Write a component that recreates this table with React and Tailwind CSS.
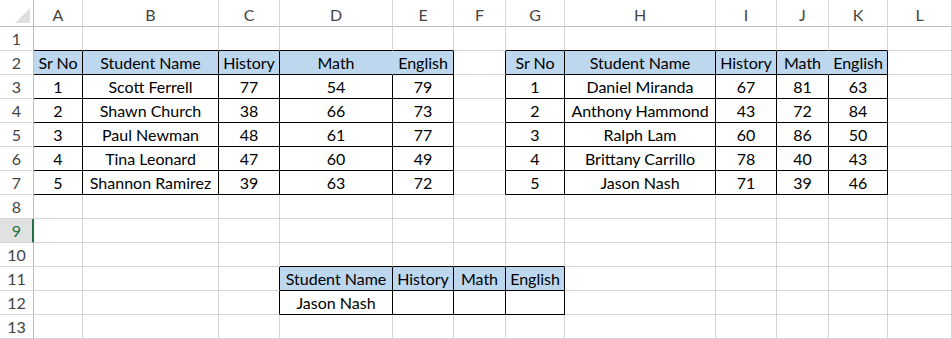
import React from "react";

const COLS = ["A", "B", "C", "D", "E", "F", "G", "H", "I", "J", "K", "L"];

// data[r][c] with r 1..13, c 1..12
const cells = {};
const put = (r, c, v) => {
  cells[`${r}-${c}`] = v;
};
const hdr = ["Sr No", "Student Name", "History", "Math", "English"];
hdr.forEach((h, i) => {
  put(2, 1 + i, h);
  put(2, 7 + i, h);
});
const t1 = [
  [1, "Scott Ferrell", 77, 54, 79],
  [2, "Shawn Church", 38, 66, 73],
  [3, "Paul Newman", 48, 61, 77],
  [4, "Tina Leonard", 47, 60, 49],
  [5, "Shannon Ramirez", 39, 63, 72],
];
const t2 = [
  [1, "Daniel Miranda", 67, 81, 63],
  [2, "Anthony Hammond", 43, 72, 84],
  [3, "Ralph Lam", 60, 86, 50],
  [4, "Brittany Carrillo", 78, 40, 43],
  [5, "Jason Nash", 71, 39, 46],
];
t1.forEach((row, i) => row.forEach((v, j) => put(3 + i, 1 + j, v)));
t2.forEach((row, i) => row.forEach((v, j) => put(3 + i, 7 + j, v)));
["Student Name", "History", "Math", "English"].forEach((h, i) => put(11, 4 + i, h));
put(12, 4, "Jason Nash");

const tables = [
  { r0: 2, r1: 7, c0: 1, c1: 5, noDiv: 4 },
  { r0: 2, r1: 7, c0: 7, c1: 11, noDiv: 10 },
  { r0: 11, r1: 12, c0: 4, c1: 7, noDiv: -1 },
];

const tableOf = (r, c) =>
  tables.find((t) => r >= t.r0 && r <= t.r1 && c >= t.c0 && c <= t.c1);

const isHeader = (r, c) => {
  const t = tableOf(r, c);
  return t && r === t.r0;
};

function rightClass(r, c) {
  const t = tableOf(r, c);
  const tn = tableOf(r, c + 1);
  if (t && r === t.r0 && c === t.noDiv) return "border-r-[#bdd7ee]";
  if (t || tn) return "border-r-black";
  return "border-r-[#d4d4d4]";
}

function bottomClass(r, c) {
  if (tableOf(r, c) || tableOf(r + 1, c)) return "border-b-black";
  return "border-b-[#d4d4d4]";
}

export default function App() {
  const rows = [];
  for (let r = 1; r <= 13; r++) rows.push(r);

  return (
    <div
      className="w-[952px] h-[339px] overflow-hidden bg-white"
      style={{ fontFamily: "Lato, 'Liberation Sans', sans-serif" }}
    >
      <div className="grid grid-cols-[34px_49px_136px_61px_113px_61px_52px_59px_151px_61px_52px_59px_64px] grid-rows-[27px_repeat(13,24px)] text-[16px]">
        {/* corner */}
        <div className="relative border-r border-b border-r-[#bfbfbf] border-b-[#bfbfbf] bg-white">
          <svg className="absolute left-0 top-0" width="33" height="26" viewBox="0 0 33 26">
            <polygon points="15,23 30,23 30,8" fill="#dfdfdf" />
          </svg>
        </div>
        {COLS.map((l) => (
          <div
            key={l}
            className="flex items-center justify-center pt-[3px] border-r border-b border-r-[#dadada] border-b-[#bfbfbf] text-[#444444] bg-white"
          >
            {l}
          </div>
        ))}
        {rows.map((r) => (
          <React.Fragment key={r}>
            {r === 9 ? (
              <div className="flex items-center justify-center pl-[1px] border-r-2 border-b border-r-[#217346] border-b-[#d4d4d4] bg-[#e1e1e1] text-[#217346]">
                {r}
              </div>
            ) : (
              <div className="flex items-center justify-center border-r border-b border-r-[#bfbfbf] border-b-[#d4d4d4] text-[#444444] bg-white">
                {r}
              </div>
            )}
            {COLS.map((l, i) => {
              const c = i + 1;
              const v = cells[`${r}-${c}`];
              const head = isHeader(r, c);
              return (
                <div
                  key={l}
                  className={`flex items-center justify-center whitespace-nowrap overflow-hidden border-r border-b text-black ${rightClass(
                    r,
                    c
                  )} ${bottomClass(r, c)} ${head ? "bg-[#bdd7ee]" : "bg-white"}`}
                >
                  {v}
                </div>
              );
            })}
          </React.Fragment>
        ))}
      </div>
    </div>
  );
}
